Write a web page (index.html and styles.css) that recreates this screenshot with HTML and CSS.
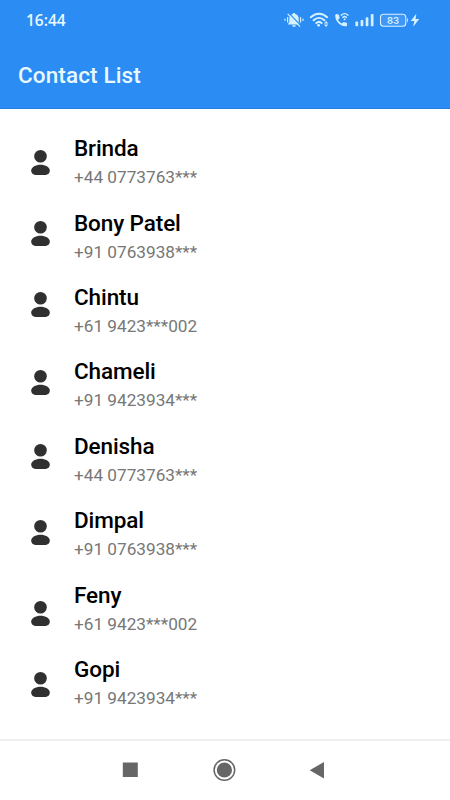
FILE: index.html
```html
<!DOCTYPE html>
<html lang="en">
<head>
<meta charset="utf-8">
<title>Contact List</title>
<link rel="stylesheet" href="styles.css">
</head>
<body>
<svg class="defs" width="0" height="0" aria-hidden="true">
  <symbol id="person" viewBox="0 0 19 26">
    <circle cx="9.5" cy="6.3" r="6.3"/>
    <path d="M9.5 14.7c4.8 0 9.3 2.4 9.3 5.8 0 3-2.3 4.5-5.2 4.5H5.4c-2.9 0-5.2-1.5-5.2-4.5 0-3.4 4.5-5.8 9.3-5.8z"/>
  </symbol>
</svg>
<header class="top">
  <div class="status">
    <span class="time">16:44</span>
    <svg class="indicators" width="140" height="20" viewBox="283 10 140 20">
      <g fill="none" stroke="currentColor" stroke-linecap="round">
        <path d="M285 19v1.4M287.6 17.5v4.4M300.6 17.5v4.4M303 19v1.4" stroke-width="1.2"/>
        <path d="M310.8 17.3c4.8-4.7 11.5-4.7 16.3 0M313.6 20.3c3.2-3.1 7.6-3.1 10.8 0M316.3 23.1c1.7-1.5 3.7-1.5 5.3 0" stroke-width="2"/>
        <path d="M341.2 15.2c2-1.9 4.8-1.9 6.8 0M342.7 17.4c1.1-1 2.7-1 3.8 0" stroke-width="1.3"/>
      </g>
      <g fill="currentColor">
        <path d="M294 13c.8 0 1.3.5 1.3 1.1 2.3.6 3.4 2.4 3.4 4.7v3l1.5 2.6h-12.4l1.5-2.6v-3c0-2.3 1.1-4.1 3.4-4.7 0-.6.5-1.1 1.3-1.1zM292.2 25.2h3.6c-.2 1.2-.8 1.7-1.8 1.7s-1.6-.5-1.8-1.7z"/>
        <circle cx="318.6" cy="25.3" r="1.4"/>
        <path d="M324 23.4l2.1-2.5 2.1 2.5zM324 24.5h4.2l-2.1 2.5z"/>
        <path d="M336.4 14.1l2.3.4 1 3.5-1.6 1.7c.8 1.7 2 2.9 3.8 3.8l1.7-1.6 3.5 1-.1 2.5c-.2.7-.9 1-1.7.9-5.7-.6-9.6-4.6-10.1-10.3-.1-.9.4-1.8 1.2-1.9z"/>
        <circle cx="344.6" cy="19.3" r="1"/>
        <rect x="355.4" y="21.5" width="2.7" height="4.8" rx=".7"/>
        <rect x="360.6" y="20" width="2.7" height="6.3" rx=".7"/>
        <rect x="365.7" y="17.3" width="2.7" height="9" rx=".7"/>
        <rect x="370.8" y="14" width="2.7" height="12.3" rx=".7"/>
        <path d="M407 18v4.5c1.2-.3 1.2-4.2 0-4.5zM416.3 13.7l-5.6 7.4h3.6l-1.1 5.6 6-7.6h-3.6z"/>
      </g>
      <path class="slash" d="M288.9 13.1l12.2 12.8"/>
      <path d="M287.7 13.9l12.3 12.8" stroke="currentColor" stroke-width="1.2"/>
      <rect x="380.5" y="14.3" width="25.3" height="12" rx="3" fill="#fff" fill-opacity=".1" stroke="currentColor" stroke-width="1.1"/>
      <text class="charge" x="393.1" y="23.8" text-anchor="middle">83</text>
    </svg>
  </div>
  <h1>Contact List</h1>
</header>
<main class="list">
  <div class="row"><svg class="person"><use href="#person"/></svg><div><div class="name">Brinda</div><div class="phone">+44 0773763***</div></div></div>
  <div class="row"><svg class="person"><use href="#person"/></svg><div><div class="name">Bony Patel</div><div class="phone">+91 0763938***</div></div></div>
  <div class="row"><svg class="person"><use href="#person"/></svg><div><div class="name">Chintu</div><div class="phone">+61 9423***002</div></div></div>
  <div class="row"><svg class="person"><use href="#person"/></svg><div><div class="name">Chameli</div><div class="phone">+91 9423934***</div></div></div>
  <div class="row"><svg class="person"><use href="#person"/></svg><div><div class="name">Denisha</div><div class="phone">+44 0773763***</div></div></div>
  <div class="row"><svg class="person"><use href="#person"/></svg><div><div class="name">Dimpal</div><div class="phone">+91 0763938***</div></div></div>
  <div class="row"><svg class="person"><use href="#person"/></svg><div><div class="name">Feny</div><div class="phone">+61 9423***002</div></div></div>
  <div class="row"><svg class="person"><use href="#person"/></svg><div><div class="name">Gopi</div><div class="phone">+91 9423934***</div></div></div>
</main>
<nav class="nav">
  <svg width="24" height="24" viewBox="0 0 24 24"><path d="M4.8 4.5h15v14.5h-15z"/></svg>
  <svg width="24" height="24" viewBox="0 0 24 24"><circle cx="12.4" cy="12" r="10.3" fill="none" stroke="currentColor" stroke-width="1.5"/><circle cx="12.4" cy="12" r="7.6"/></svg>
  <svg width="24" height="24" viewBox="0 0 24 24"><path d="M4.7 12.2L19 4v16.4z"/></svg>
</nav>
</body>
</html>
```
FILE: styles.css
```css
* { box-sizing: border-box; }
body {
  margin: 0;
  height: 800px;
  display: flex;
  flex-direction: column;
  overflow: hidden;
  background: #fff;
  font-family: Roboto, "Liberation Sans", sans-serif;
}
.defs { position: absolute; }
.top {
  height: 109px;
  flex: none;
  background: #2b8cf4;
  border-bottom: 1px solid #237fe0;
  color: #e8f9ff;
}
.status {
  height: 40px;
  padding: 0 27px 0 26px;
  display: flex;
  justify-content: space-between;
  align-items: center;
}
.time {
  font: 600 15.5px/20px "Open Sans", sans-serif;
}
.indicators { display: block; color: #d5f1ff; }
.slash { stroke: #2b8cf4; stroke-width: 1.3; }
.charge { font: 600 9.5px Inter, sans-serif; fill: currentColor; }
h1 {
  margin: 20px 0 0 18px;
  font-size: 22.5px;
  line-height: 31px;
  font-weight: 500;
  letter-spacing: .12px;
}
.list { flex: 1; padding: 24px 0 0 31px; }
.row { height: 74.4px; display: flex; gap: 24px; }
.person { width: 19px; height: 26px; margin-top: 16.6px; fill: #303030; }
.row:nth-child(2) .person { margin-top: 13.3px; }
.row:nth-child(3) .person { margin-top: 10.2px; }
.row:nth-child(4) .person { margin-top: 13.5px; }
.row:nth-child(5) .person { margin-top: 13.1px; }
.row:nth-child(6) .person { margin-top: 14.7px; }
.row:nth-child(7) .person { margin-top: 21.2px; }
.row:nth-child(8) .person { margin-top: 18px; }
.name { padding-top: .3px; font-size: 22.5px; line-height: 30px; font-weight: 500; letter-spacing: -.1px; color: #000; }
.phone { font-size: 17.2px; line-height: 29.5px; color: #777; }
.nav {
  height: 61px;
  flex: none;
  border-top: 2px solid #f0f0f0;
  padding: 0 121px 2px 118px;
  display: flex;
  justify-content: space-between;
  align-items: center;
  color: #666;
  fill: #666;
}
```
